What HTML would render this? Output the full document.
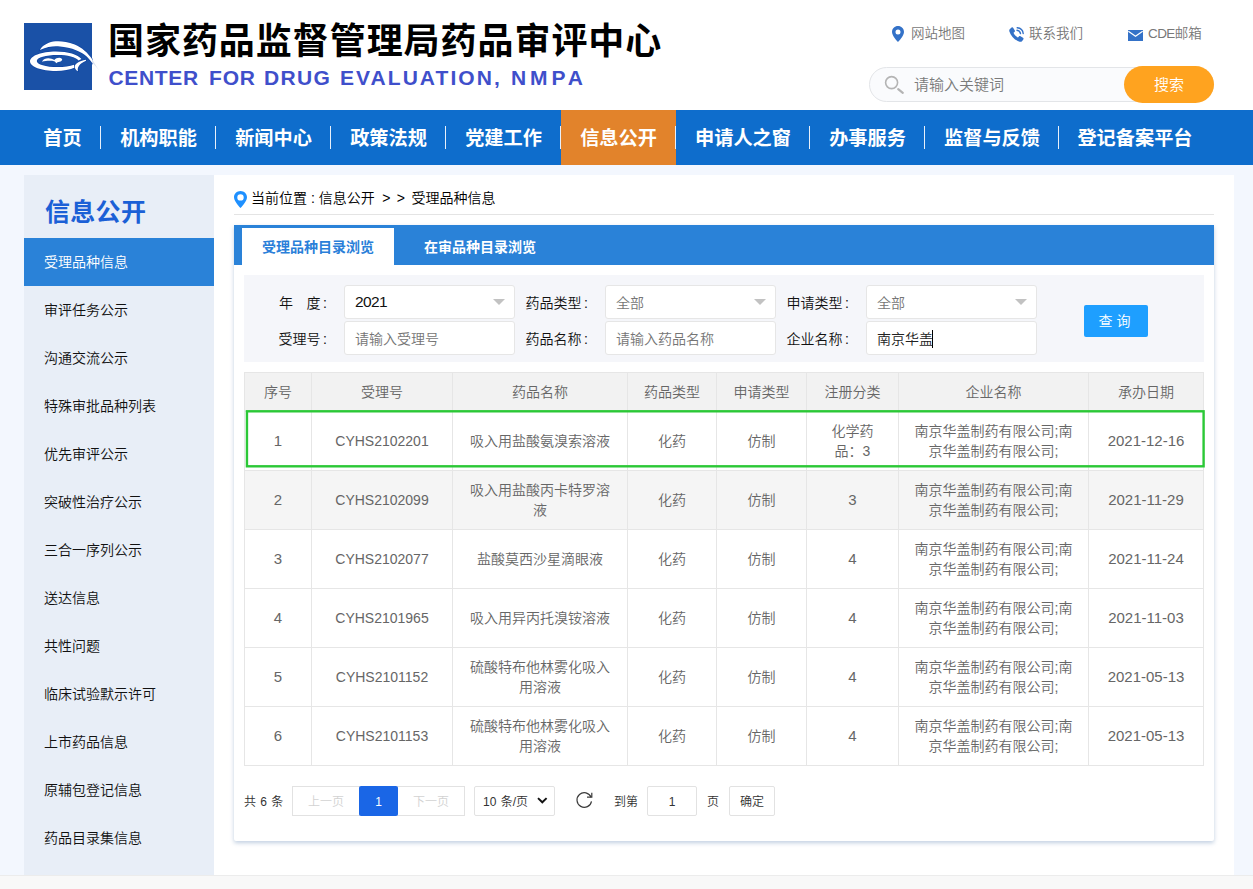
<!DOCTYPE html>
<html lang="zh-CN">
<head>
<meta charset="utf-8">
<title>受理品种信息</title>
<style>
*{box-sizing:border-box;margin:0;padding:0}
html,body{width:1253px;height:889px;overflow:hidden}
body{position:relative;background:#f3f7fe;font-weight:350;font-family:"Liberation Sans","Noto Sans CJK SC",sans-serif;font-size:14px;color:#333}
.abs{position:absolute}
#hdr{position:absolute;left:0;top:0;width:1253px;height:110px;background:#fff}
#logo{position:absolute;left:24px;top:23px;width:68px;height:67px;background:#1a51a7}
#t1{position:absolute;left:108px;top:15.5px;font-size:36px;font-weight:700;color:#000;letter-spacing:.95px;line-height:52px;white-space:nowrap}
#t2 span{position:absolute;top:65px;font-size:21px;font-weight:700;color:#3f4fcb;line-height:26px;white-space:nowrap}
.toplnk{position:absolute;top:24px;font-size:13.5px;color:#777;line-height:20px;white-space:nowrap}
#srch{position:absolute;left:869px;top:67px;width:345px;height:35px;border:1px solid #e3e5e8;border-radius:18px;background:#fafbfd}
#srch span{position:absolute;left:44px;top:0;line-height:33px;font-size:15px;color:#7b7b7b}
#sbtn{position:absolute;left:1124px;top:66px;width:90px;height:37px;border-radius:19px;background:#ffa31f;color:#fff;font-size:15px;text-align:center;line-height:37px}
#nav{position:absolute;left:0;top:110px;width:1253px;height:55px;background:#0e6dcc}
#nav .it{position:absolute;top:0;height:55px;line-height:57px;font-size:19.2px;font-weight:700;color:#fff;white-space:nowrap;text-align:center}
#nav .sep{position:absolute;top:16px;width:1px;height:23px;background:#e8f0fa}
#nav .act{background:#e2832b}
#side{position:absolute;left:24px;top:175px;width:190px;height:700px;background:#e8eef7;z-index:2}
#side h2{position:absolute;left:21px;top:19px;font-size:25px;font-weight:700;color:#1b60d6;letter-spacing:.3px;line-height:36px}
#side .mi{position:absolute;left:0;width:190px;height:48px;line-height:48px;padding-left:20px;font-size:14px;color:#111}
#side .mi.on{background:#2a82d8;color:#fff}
#wrap{position:absolute;left:214px;top:175px;width:1020px;height:700px;background:#fff}
#bc{position:absolute;left:251px;top:188px;font-size:14px;line-height:20px;color:#000;white-space:nowrap}
#bcline{position:absolute;left:234px;top:214px;width:980px;height:1px;background:#e4e4e4}
#main{position:absolute;left:234px;top:225px;width:980px;height:616px;background:#fff;border-radius:0 0 2px 2px;box-shadow:0 2px 4.5px rgba(100,135,180,.4)}
#tabbar{position:absolute;left:0;top:0;width:980px;height:40px;background:#2a82d8}
#tab1{position:absolute;left:8px;top:3px;width:152px;height:37px;background:#fff;color:#2a7fd9;font-weight:700;font-size:14px;line-height:38px;text-align:center}
#tab2{position:absolute;left:190px;top:3px;font-weight:700;font-size:14px;line-height:38px;color:#fff;white-space:nowrap}
#flt{position:absolute;left:10px;top:50px;width:960px;height:87px;background:#f5f6fa}
.lb{position:absolute;font-size:14px;color:#111;line-height:20px;white-space:nowrap;text-align:right;width:60px}
.lb b{font-weight:350;margin-left:2.5px}
.ip{position:absolute;width:171px;height:34px;border:1px solid #e6e6e6;border-radius:3px;background:#fff;font-size:14px;line-height:34px;padding-left:10px;color:#757575;white-space:nowrap}
.ip .ar{position:absolute;right:9px;top:13px;width:0;height:0;border-left:6px solid transparent;border-right:6px solid transparent;border-top:6px solid #c2c2c2}
#qbtn{position:absolute;left:850px;top:80px;width:64px;height:32px;background:#1e9fff;border-radius:2px;color:#fff;font-size:14px;line-height:33px;text-align:center;padding-right:3px}
table{position:absolute;left:10px;top:147px;width:959px;border-collapse:collapse;table-layout:fixed}
th,td{border:1px solid #e6e6e6;text-align:center;font-weight:350;font-size:14px;color:#666;line-height:20px;padding:0 15px}
th{height:39px;background:#f2f2f2}
td{height:59px}
tr.hv td{background:#f5f5f5}
td.n{font-size:15px}
.pg{position:absolute;font-size:12px;color:#333;line-height:20px;white-space:nowrap;word-spacing:1px}
.pb{position:absolute;top:561px;height:30px;border:1px solid #e2e2e2;font-size:12px;line-height:30px;text-align:center;color:#333;background:#fff;white-space:nowrap}
#foot{position:absolute;left:0;top:875px;width:1253px;height:14px;background:#f8f8f8;border-top:1px solid #ececec;z-index:3}
</style>
</head>
<body>
<div id="hdr">
  <div id="logo"><svg width="80" height="67" viewBox="0 0 80 67" style="position:absolute;left:0;top:0;overflow:visible">
    <g fill="#fff" stroke="#0e43a2" stroke-width="1.2" paint-order="stroke">
    <path d="M15.9 27C18 23 23 19.8 29.2 18.6C35 17.6 42 18.3 50.7 21.5C58 24.5 64 30 68 36L68 39.8C66 37 64.5 35.3 62.4 33.3C59.5 30.6 56.5 28.8 52.6 27.4C47 25 41 24 36 23.5C30 22.8 24 23.5 15.9 27Z"/>
    <path fill-rule="evenodd" d="M6 38.3C6 32.8 17.5 28.4 31.8 28.4C44 28.4 54 31.5 57.5 36L54.5 37.6C52 34 43.5 32 33.5 32C22 32 12.8 34.4 12.8 37.9C12.8 41.4 22 44 33.5 44C40 44 46 43.2 50 41.7L51 44.5C46 46.8 39.5 48 31.8 48C17.5 48 6 43.8 6 38.3Z"/>
    <path d="M62 36.8C55 38 50.3 41 50.8 44.2C51.2 46.2 52.5 47.6 54 48.2C53 45 54.8 41 62 37.8Z"/>
    </g>
    <path d="M68 36L75 47.5C72 43.5 70 41.5 68 39.8Z" fill="#dde5f2"/>
    <path d="M17.9 38.8C19.5 36 22 35.2 24.5 35.3C26.5 35.4 28.5 35.8 30.3 37C31.5 35.5 33.5 34.6 35.5 34.7C36.8 34.8 37.6 35.3 38.2 36.2C38 37.5 37 38.5 35.5 38.8C34 39 33 39.5 32.3 40.3C31.8 39.3 31 38.5 30 38.2C27 37.6 21.5 37.8 17.9 38.8Z" fill="#fff"/>
  </svg></div>
  <div id="t1">国家药品监督管理局药品审评中心</div>
  <div id="t2"><span style="left:108.5px;letter-spacing:.65px">CENTER</span> <span style="left:209px;letter-spacing:.8px">FOR</span> <span style="left:264px;letter-spacing:1.35px">DRUG</span> <span style="left:340px;letter-spacing:2.05px">EVALUATION,</span> <span style="left:511px;letter-spacing:3.9px">NMPA</span></div>
  <svg class="abs" style="left:892px;top:26px" width="12" height="16" viewBox="0 0 12 16"><path fill-rule="evenodd" d="M6 0C2.7 0 0 2.6 0 5.9C0 10 6 16 6 16C6 16 12 10 12 5.9C12 2.6 9.3 0 6 0ZM6 3.4A2.5 2.5 0 1 1 6 8.4A2.5 2.5 0 1 1 6 3.4Z" fill="#3472c8"/></svg>
  <svg class="abs" style="left:1009px;top:27px" width="15" height="15" viewBox="0 0 15 15"><path d="M2.6 0.6C3.2 0.1 3.9 0.3 4.3 0.9L5.8 3.4C6.1 4 6 4.6 5.5 5L4.5 5.8C5.3 7.8 6.9 9.5 9 10.5L9.9 9.5C10.3 9 11 8.9 11.5 9.2L14 10.7C14.6 11.1 14.8 11.8 14.3 12.4L13.2 13.9C12.6 14.7 11.6 15 10.6 14.7C5.6 13.2 1.7 9.2 0.3 4.3C0 3.3 0.4 2.3 1.2 1.7Z" fill="#3472c8"/><path d="M8 3.2C9.8 3.4 11.2 4.8 11.5 6.6" stroke="#3472c8" stroke-width="1.4" fill="none" stroke-linecap="round"/><path d="M8.2 0.7C11.4 1 13.9 3.4 14.2 6.5" stroke="#3472c8" stroke-width="1.4" fill="none" stroke-linecap="round"/></svg>
  <svg class="abs" style="left:1128px;top:30px" width="15" height="11" viewBox="0 0 15 11"><rect width="15" height="11" fill="#3472c8"/><path d="M0.3 1.2L7.5 6.2L14.7 1.2" stroke="#fff" stroke-width="1.3" fill="none"/></svg>
  
  <div class="toplnk" style="left:911px">网站地图</div>
  <div class="toplnk" style="left:1029px">联系我们</div>
  <div class="toplnk" style="left:1148px"><span style="letter-spacing:-.6px">CDE</span>邮箱</div>
  <div id="srch"><svg class="abs" style="left:14px;top:7px" width="21" height="20" viewBox="0 0 21 20"><circle cx="7.6" cy="7.6" r="6" stroke="#b4b4b4" stroke-width="1.6" fill="none"/><path d="M14.2 14.2L18.8 17.8" stroke="#b4b4b4" stroke-width="2.2" stroke-linecap="round"/></svg><span>请输入关键词</span></div>
  <div id="sbtn">搜索</div>
</div>
<div id="nav">
  <div class="it" style="left:24px;width:77px">首页</div>
  <div class="it" style="left:101px;width:115px">机构职能</div>
  <div class="it" style="left:216px;width:115px">新闻中心</div>
  <div class="it" style="left:331px;width:115px">政策法规</div>
  <div class="it" style="left:446px;width:115px">党建工作</div>
  <div class="it act" style="left:561px;width:115px">信息公开</div>
  <div class="it" style="left:676px;width:134px">申请人之窗</div>
  <div class="it" style="left:810px;width:115px">办事服务</div>
  <div class="it" style="left:925px;width:134px">监督与反馈</div>
  <div class="it" style="left:1059px;width:152px">登记备案平台</div>
  <div class="sep" style="left:100px"></div>
  <div class="sep" style="left:215px"></div>
  <div class="sep" style="left:330px"></div>
  <div class="sep" style="left:445px"></div>
  <div class="sep" style="left:560px"></div>
  <div class="sep" style="left:675px"></div>
  <div class="sep" style="left:809px"></div>
  <div class="sep" style="left:924px"></div>
  <div class="sep" style="left:1058px"></div>
</div>
<div id="side">
  <h2>信息公开</h2>
  <div class="mi on" style="top:63px">受理品种信息</div>
  <div class="mi" style="top:111px">审评任务公示</div>
  <div class="mi" style="top:159px">沟通交流公示</div>
  <div class="mi" style="top:207px">特殊审批品种列表</div>
  <div class="mi" style="top:255px">优先审评公示</div>
  <div class="mi" style="top:303px">突破性治疗公示</div>
  <div class="mi" style="top:351px">三合一序列公示</div>
  <div class="mi" style="top:399px">送达信息</div>
  <div class="mi" style="top:447px">共性问题</div>
  <div class="mi" style="top:495px">临床试验默示许可</div>
  <div class="mi" style="top:543px">上市药品信息</div>
  <div class="mi" style="top:591px">原辅包登记信息</div>
  <div class="mi" style="top:639px">药品目录集信息</div>
</div>
<div id="wrap"></div>
<div id="bc">当前位置 : 信息公开<span style="word-spacing:2.6px;margin-left:1px"> &gt; &gt; </span>受理品种信息</div>
<div id="bcline"></div>
<svg class="abs" style="left:234px;top:191px" width="13" height="17" viewBox="0 0 13 17"><path fill-rule="evenodd" d="M6.5 0C2.9 0 0 2.8 0 6.3C0 10.6 6.5 17 6.5 17C6.5 17 13 10.6 13 6.3C13 2.8 10.1 0 6.5 0ZM6.5 3.2A3.2 3.2 0 1 1 6.5 9.6A3.2 3.2 0 1 1 6.5 3.2Z" fill="#1e90ff"/></svg>
<div id="main">
  <div id="tabbar"></div>
  <div id="tab1">受理品种目录浏览</div>
  <div id="tab2">在审品种目录浏览</div>
  <div id="flt"></div>
  <div class="lb" style="left:33px;top:68px">年<span style="margin-left:13.5px">度</span><b>:</b></div>
  <div class="lb" style="left:33px;top:104px">受理号<b>:</b></div>
  <div class="lb" style="left:280px;top:68px;width:74px">药品类型<b>:</b></div>
  <div class="lb" style="left:280px;top:104px;width:74px">药品名称<b>:</b></div>
  <div class="lb" style="left:541px;top:68px;width:74px">申请类型<b>:</b></div>
  <div class="lb" style="left:541px;top:104px;width:74px">企业名称<b>:</b></div>
  <div class="ip" style="left:110px;top:60px;color:#111;font-size:15.5px;letter-spacing:-.6px;line-height:31px">2021<i class="ar"></i></div>
  <div class="ip" style="left:110px;top:96px">请输入受理号</div>
  <div class="ip" style="left:371px;top:60px">全部<i class="ar"></i></div>
  <div class="ip" style="left:371px;top:96px">请输入药品名称</div>
  <div class="ip" style="left:632px;top:60px">全部<i class="ar"></i></div>
  <div class="ip" style="left:632px;top:96px;color:#222">南京华盖<span style="display:inline-block;width:1px;height:18px;background:#000;vertical-align:-4px;margin-left:-1px"></span></div>
  <div id="qbtn">查 询</div>
  <table>
   <colgroup><col style="width:67px"><col style="width:141px"><col style="width:175px"><col style="width:89px"><col style="width:90px"><col style="width:92px"><col style="width:190px"><col style="width:115px"></colgroup>
   <tr><th>序号</th><th>受理号</th><th>药品名称</th><th>药品类型</th><th>申请类型</th><th>注册分类</th><th>企业名称</th><th>承办日期</th></tr>
   <tr><td class="n">1</td><td>CYHS2102201</td><td>吸入用盐酸氨溴索溶液</td><td>化药</td><td>仿制</td><td>化学药品：3</td><td>南京华盖制药有限公司;南京华盖制药有限公司;</td><td class="n">2021-12-16</td></tr>
   <tr class="hv"><td class="n">2</td><td>CYHS2102099</td><td>吸入用盐酸丙卡特罗溶液</td><td>化药</td><td>仿制</td><td class="n">3</td><td>南京华盖制药有限公司;南京华盖制药有限公司;</td><td class="n">2021-11-29</td></tr>
   <tr><td class="n">3</td><td>CYHS2102077</td><td>盐酸莫西沙星滴眼液</td><td>化药</td><td>仿制</td><td class="n">4</td><td>南京华盖制药有限公司;南京华盖制药有限公司;</td><td class="n">2021-11-24</td></tr>
   <tr><td class="n">4</td><td>CYHS2101965</td><td>吸入用异丙托溴铵溶液</td><td>化药</td><td>仿制</td><td class="n">4</td><td>南京华盖制药有限公司;南京华盖制药有限公司;</td><td class="n">2021-11-03</td></tr>
   <tr><td class="n">5</td><td>CYHS2101152</td><td>硫酸特布他林雾化吸入用溶液</td><td>化药</td><td>仿制</td><td class="n">4</td><td>南京华盖制药有限公司;南京华盖制药有限公司;</td><td class="n">2021-05-13</td></tr>
   <tr><td class="n">6</td><td>CYHS2101153</td><td>硫酸特布他林雾化吸入用溶液</td><td>化药</td><td>仿制</td><td class="n">4</td><td>南京华盖制药有限公司;南京华盖制药有限公司;</td><td class="n">2021-05-13</td></tr>
  </table>
  <svg class="abs" style="left:0;top:0" width="980" height="300" viewBox="0 0 980 300"><rect x="12.95" y="186.3" width="956.65" height="55" fill="none" stroke="#2bc836" stroke-width="2.4"/></svg>
  <div class="pg" style="left:10px;top:567px">共 6 条</div>
  <div class="pb" style="left:58px;width:68px;color:#d2d2d2">上一页</div>
  <div class="pb" style="left:163px;width:68px;color:#d2d2d2">下一页</div>
  <div class="pb" style="left:125px;width:39px;line-height:32px;border:0;background:#1a66e6;color:#fff;border-radius:2px">1</div>
  <div class="pb" style="left:240px;width:81px;text-align:left;padding-left:8px;border-radius:2px;word-spacing:1px">10 条/页</div>
  <svg class="abs" style="left:303px;top:572px" width="11" height="7" viewBox="0 0 11 7"><path d="M1 1.1L5.3 5.3L9.6 1.1" stroke="#111" stroke-width="1.9" fill="none"/></svg>
  <svg class="abs" style="left:341px;top:566px" width="19" height="18" viewBox="0 0 19 18"><path d="M16.5 10.3A7.3 7.3 0 1 1 16.07 6.27" stroke="#3a3a3a" stroke-width="1.2" fill="none"/><path d="M12 6.2L16.8 6.2L16.8 1.8" stroke="#3a3a3a" stroke-width="1.2" fill="none"/></svg>
  <div class="pg" style="left:380px;top:567px">到第</div>
  <div class="pb" style="left:413px;width:50px;border-radius:2px">1</div>
  <div class="pg" style="left:473px;top:567px">页</div>
  <div class="pb" style="left:495px;width:46px;border-radius:2px">确定</div>
</div>
<div id="foot"></div>
</body>
</html>
